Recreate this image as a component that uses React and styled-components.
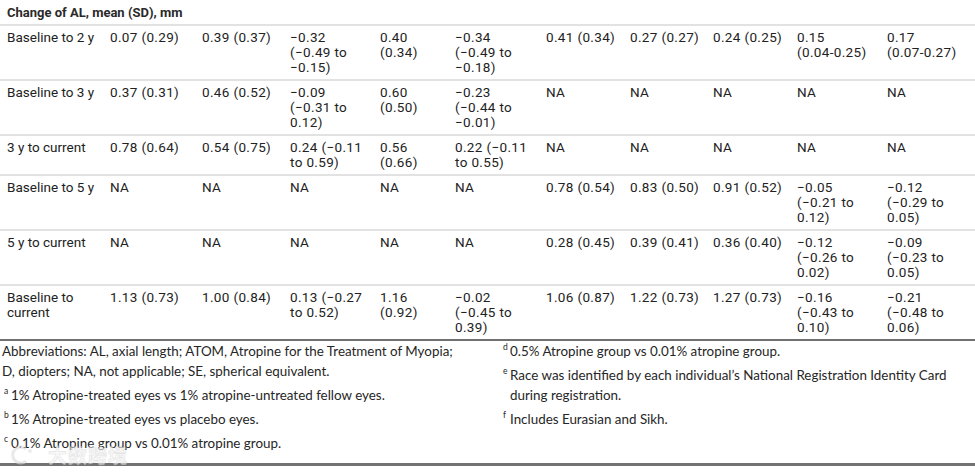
import React from "react";
import styled, { createGlobalStyle } from "styled-components";

const Global = createGlobalStyle`
  html, body { margin: 0; padding: 0; background: #fff; }
  body { font-family: Roboto, "Noto Sans", sans-serif; color: #232323; }
`;

const COLS = "110px 92px 88px 90px 75px 91px 84px 83px 84px 90px 1fr";

const Page = styled.div`
  position: relative;
  width: 975px;
  height: 472px;
  overflow: hidden;
  background: #fff;
`;

const Heading = styled.div`
  padding: 5px 7px 4px;
  font-size: 13px;
  line-height: 15px;
  font-weight: 700;
  color: #2a2a2a;
  border-bottom: 2px solid #e2e2e2;
`;

const Row = styled.div`
  display: grid;
  grid-template-columns: ${COLS};
  padding: 4px 0;
  border-bottom: 2px solid ${(p) => (p.$last ? "#707070" : "#e2e2e2")};
  font-size: 13.5px;
  line-height: 15px;
`;

const Label = styled.div`
  padding-left: 7px;
  color: #222;
`;

const Cell = styled.div`
  letter-spacing: 0.35px;
  color: #222;
  white-space: nowrap;
`;

const Line = styled.div``;

const Notes = styled.div`
  display: grid;
  grid-template-columns: 499px 1fr;
  padding: 0 0 0 2px;
  height: 122px;
  border-bottom: 3px solid #727272;
  font-family: Lato, "Open Sans", sans-serif;
  font-size: 13.4px;
  line-height: 20px;
  color: #262626;
`;

const NoteCol = styled.div`
  display: flex;
  flex-direction: column;
  gap: 4px;
`;

const Note = styled.div`
  display: flex;
`;

const Sup = styled.span`
  flex: 0 0 9px;
  padding-left: 2px;
  box-sizing: border-box;
  font-size: 8.5px;
  line-height: 12px;
`;

const Watermark = styled.div`
  position: absolute;
  left: 8px;
  top: 441px;
  display: flex;
  align-items: center;
  gap: 14px;
  pointer-events: none;
  opacity: 0.6;
`;

const WmText = styled.span`
  font-family: "Noto Sans CJK SC", sans-serif;
  font-size: 19px;
  font-weight: 700;
  letter-spacing: 1px;
  color: #f4f4f4;
  -webkit-text-stroke: 0.6px #d4d4d4;
`;

const rows = [
  ["Baseline to 2 y", "0.07 (0.29)", "0.39 (0.37)", ["−0.32", "(−0.49 to", "−0.15)"], ["0.40", "(0.34)"], ["−0.34", "(−0.49 to", "−0.18)"], "0.41 (0.34)", "0.27 (0.27)", "0.24 (0.25)", ["0.15", "(0.04-0.25)"], ["0.17", "(0.07-0.27)"]],
  ["Baseline to 3 y", "0.37 (0.31)", "0.46 (0.52)", ["−0.09", "(−0.31 to", "0.12)"], ["0.60", "(0.50)"], ["−0.23", "(−0.44 to", "−0.01)"], "NA", "NA", "NA", "NA", "NA"],
  ["3 y to current", "0.78 (0.64)", "0.54 (0.75)", ["0.24 (−0.11", "to 0.59)"], ["0.56", "(0.66)"], ["0.22 (−0.11", "to 0.55)"], "NA", "NA", "NA", "NA", "NA"],
  ["Baseline to 5 y", "NA", "NA", "NA", "NA", "NA", "0.78 (0.54)", "0.83 (0.50)", "0.91 (0.52)", ["−0.05", "(−0.21 to", "0.12)"], ["−0.12", "(−0.29 to", "0.05)"]],
  ["5 y to current", "NA", "NA", "NA", "NA", "NA", "0.28 (0.45)", "0.39 (0.41)", "0.36 (0.40)", ["−0.12", "(−0.26 to", "0.02)"], ["−0.09", "(−0.23 to", "0.05)"]],
  [["Baseline to", "current"], "1.13 (0.73)", "1.00 (0.84)", ["0.13 (−0.27", "to 0.52)"], ["1.16", "(0.92)"], ["−0.02", "(−0.45 to", "0.39)"], "1.06 (0.87)", "1.22 (0.73)", "1.27 (0.73)", ["−0.16", "(−0.43 to", "0.10)"], ["−0.21", "(−0.48 to", "0.06)"]],
];

const lines = (v) => (Array.isArray(v) ? v : [v]).map((t, i) => <Line key={i}>{t}</Line>);

export default function App() {
  return (
    <Page>
      <Global />
      <Heading>Change of AL, mean (SD), mm</Heading>
      {rows.map((r, i) => (
        <Row key={i} $last={i === rows.length - 1}>
          <Label>{lines(r[0])}</Label>
          {r.slice(1).map((c, j) => (
            <Cell key={j}>{lines(c)}</Cell>
          ))}
        </Row>
      ))}
      <Notes>
        <NoteCol>
          <Note>
            <span>
              Abbreviations: AL, axial length; ATOM, Atropine for the Treatment of Myopia;
              <br />
              D, diopters; NA, not applicable; SE, spherical equivalent.
            </span>
          </Note>
          <Note>
            <Sup>a</Sup>
            <span>1% Atropine-treated eyes vs 1% atropine-untreated fellow eyes.</span>
          </Note>
          <Note>
            <Sup>b</Sup>
            <span>1% Atropine-treated eyes vs placebo eyes.</span>
          </Note>
          <Note>
            <Sup>c</Sup>
            <span>0.1% Atropine group vs 0.01% atropine group.</span>
          </Note>
        </NoteCol>
        <NoteCol>
          <Note>
            <Sup>d</Sup>
            <span>0.5% Atropine group vs 0.01% atropine group.</span>
          </Note>
          <Note>
            <Sup>e</Sup>
            <span>
              Race was identified by each individual’s National Registration Identity Card
              <br />
              during registration.
            </span>
          </Note>
          <Note>
            <Sup>f</Sup>
            <span>Includes Eurasian and Sikh.</span>
          </Note>
        </NoteCol>
      </Notes>
      <Watermark>
        <svg width="26" height="20" viewBox="0 0 26 20">
          <path d="M18 4 A8 8 0 1 0 18 16" fill="none" stroke="#dcdcdc" strokeWidth="3" />
          <circle cx="22" cy="6" r="2" fill="#e2e2e2" />
        </svg>
        <WmText>大数跨境</WmText>
      </Watermark>
    </Page>
  );
}
